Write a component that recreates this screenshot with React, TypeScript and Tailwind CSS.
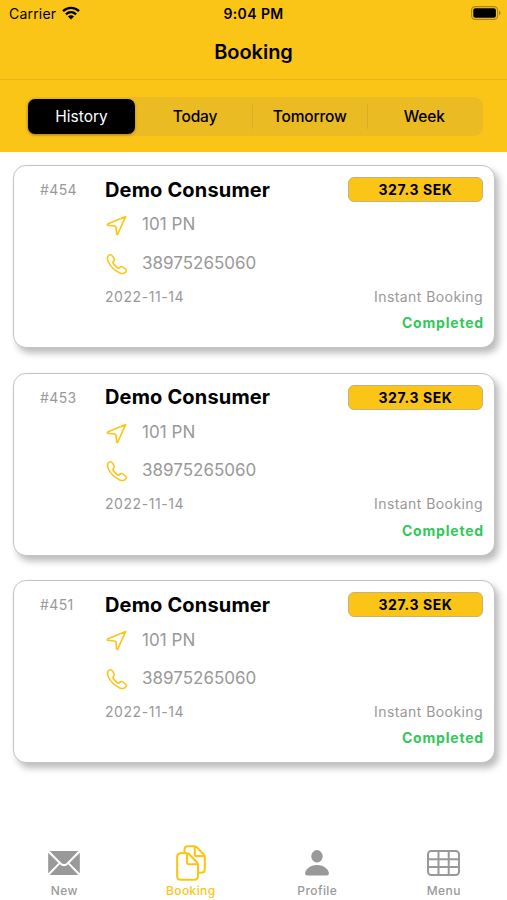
import React, { useState } from "react";
import clsx from "clsx";

interface Booking {
  id: string;
  name: string;
  address: string;
  phone: string;
  date: string;
  type: string;
  status: string;
  price: string;
}

const bookings: Booking[] = ["#454", "#453", "#451"].map((id) => ({
  id,
  name: "Demo Consumer",
  address: "101 PN",
  phone: "38975265060",
  date: "2022-11-14",
  type: "Instant Booking",
  status: "Completed",
  price: "327.3 SEK",
}));

const filters = ["History", "Today", "Tomorrow", "Week"];

function WifiIcon() {
  return (
    <svg className="w-[18px] h-[14px] -mt-px" viewBox="0 0 18 14" fill="none" stroke="#000" strokeWidth="2.4">
      <path d="M1 5.1C5.5 0.8 12.5 0.8 17 5.1" />
      <path d="M3.9 8.3C6.9 5.6 11.1 5.6 14.1 8.3" />
      <path d="M9 13.6L5.9 10.5C7.6 8.9 10.4 8.9 12.1 10.5Z" fill="#000" stroke="none" />
    </svg>
  );
}

function BatteryIcon() {
  return (
    <svg className="w-[30px] h-[14px] -mt-px" viewBox="0 0 30 14">
      <rect x="0.6" y="0.6" width="26" height="12.8" rx="3.6" fill="none" stroke="#a8851a" strokeWidth="1.1" />
      <rect x="2.3" y="2.3" width="22.6" height="9.4" rx="2" fill="#000" />
      <path d="M28 4.8C30 5.4 30 8.6 28 9.2Z" fill="#a8851a" />
    </svg>
  );
}

function LocationIcon() {
  return (
    <svg className="w-6 h-6" viewBox="0 0 24 24" fill="none" stroke="#fbc518" strokeWidth="1.6" strokeLinejoin="round">
      <path d="M20.6 3.6L2.6 11.1C2 11.4 2 12.1 2.7 12.3L10.8 13.2L11.6 20.9C11.7 21.7 12.4 21.7 12.7 21.1Z" />
    </svg>
  );
}

function PhoneIcon() {
  return (
    <svg className="w-6 h-6" viewBox="0 0 24 24" fill="none" stroke="#fbc518" strokeWidth="1.6" strokeLinejoin="round">
      <path d="M3.2 4C4.3 2.6 5.9 2.2 7 3.6L9 6.4C9.7 7.5 9.5 8.3 8.7 9.2L8.1 9.9C7.7 10.4 7.8 10.8 8.1 11.3C9.2 13 10.8 14.7 12.8 16C13.3 16.3 13.8 16.3 14.2 15.9L14.9 15.2C15.7 14.5 16.6 14.3 17.5 14.9L20.4 16.9C21.8 18 21.5 19.5 20.1 20.6C18.7 21.8 16.8 21.8 14.8 20.9C9.7 18.7 5.3 14.3 3.1 9.3C2.2 7.2 2.1 5.4 3.2 4Z" />
    </svg>
  );
}

function MailIcon() {
  return (
    <svg className="w-8 h-6" viewBox="0 0 32 24" fill="#999">
      <path d="M1.6 0H30.4L19.1 11.4C17.2 13.4 14.8 13.4 12.9 11.4Z" />
      <path d="M0.2 1.7L10.5 12L0.2 22.3Z" />
      <path d="M31.8 1.7L21.5 12L31.8 22.3Z" />
      <path d="M1.6 24L11.8 13.3C14.4 15.9 17.6 15.9 20.2 13.3L30.4 24Z" />
    </svg>
  );
}

function DocumentsIcon() {
  return (
    <svg className="w-[30px] h-9" viewBox="0 0 30 36" fill="none" stroke="#fbc518" strokeWidth="2.1" strokeLinejoin="round">
      <path d="M8.5 8V4.5C8.5 2.5 9.7 1.2 11.8 1.2H18.2C19.3 1.2 20 1.5 20.8 2.3L27.6 9.2C28.5 10.1 28.8 10.9 28.8 12V24C28.8 26.6 27.5 27.8 25 27.8H22.5" />
      <path d="M18.8 1.5V9.5C18.8 10.5 19.3 11.1 20.4 11.1H28.4" />
      <path d="M11 8.3H4.7C2.5 8.3 1.2 9.6 1.2 11.8V31C1.2 33.4 2.4 34.7 4.8 34.7H18.2C20.8 34.7 22 33.4 22 31V19.8C22 18.7 21.7 18 20.9 17.2L13.2 9.3C12.5 8.6 11.9 8.3 11 8.3Z" />
      <path d="M11.1 8.5V17.6C11.1 18.7 11.7 19.3 12.8 19.3H21.8" />
    </svg>
  );
}

function PersonIcon() {
  return (
    <svg className="w-6 h-[26px]" viewBox="0 0 24 26" fill="#999">
      <ellipse cx="12" cy="6.3" rx="5.7" ry="6.2" />
      <path d="M2.4 25.6C0.9 25.6 0.1 24.8 0.1 23.6C0.1 20 4.6 15.1 12 15.1C19.4 15.1 23.9 20 23.9 23.6C23.9 24.8 23.1 25.6 21.6 25.6Z" />
    </svg>
  );
}

function TableIcon() {
  return (
    <svg className="w-[33px] h-[26px]" viewBox="0 0 33 26" fill="none" stroke="#999" strokeWidth="2">
      <rect x="1" y="1" width="31" height="24" rx="3.2" />
      <path d="M11.5 1V25M21.7 1V25M1 9.3H32M1 17.1H32" />
    </svg>
  );
}

const tabs = [
  { label: "New", icon: <MailIcon /> },
  { label: "Booking", icon: <DocumentsIcon /> },
  { label: "Profile", icon: <PersonIcon /> },
  { label: "Menu", icon: <TableIcon /> },
];

function BookingCard({ booking }: { booking: Booking }) {
  return (
    <article className="flex h-[183px] rounded-[13px] border border-[#c4c4c6] bg-white pt-[11px] pl-[26px] pr-[11px] shadow-[4px_5px_7px_rgba(0,0,0,0.27)] whitespace-nowrap">
      <div className="w-[65px] h-[25px] flex items-center text-[14px] tracking-[0.4px] text-[#999]">
        {booking.id}
      </div>
      <div className="flex-1">
        <div className="flex h-[25px] mb-1 items-center justify-between">
          <h2 className="text-[20px] font-bold tracking-[0.16px] text-black">{booking.name}</h2>
          <span className="flex w-[135px] h-[25px] items-center justify-center rounded-[6px] border border-[#c7b27a] bg-[#fbc518] text-[14px] font-bold tracking-[0.6px] text-black">
            {booking.price}
          </span>
        </div>
        <div className="flex h-[38px] items-center gap-[13px] text-[17px] text-[#999]">
          <LocationIcon />
          <span className="tracking-[0.05px]">{booking.address}</span>
        </div>
        <div className="flex h-[39px] items-center gap-[13px] text-[17px] text-[#999]">
          <PhoneIcon />
          <span>{booking.phone}</span>
        </div>
        <div className="flex h-[26px] items-center justify-between text-[14px] text-[#999]">
          <span className="tracking-[0.57px]">{booking.date}</span>
          <span className="tracking-[0.42px]">{booking.type}</span>
        </div>
        <div className="-mr-px flex h-[27px] items-center justify-end text-[14px] font-bold tracking-[0.8px] text-[#34c759]">
          {booking.status}
        </div>
      </div>
    </article>
  );
}

export default function App() {
  const [filter, setFilter] = useState("History");
  const [tab, setTab] = useState("Booking");

  return (
    <div className="flex flex-col w-full max-w-[507px] h-[900px] overflow-hidden bg-white font-['Inter','Liberation_Sans',sans-serif]">
      <header className="h-[152px] shrink-0 bg-[#fbc518] text-black">
        {/* Status bar */}
        <div className="grid grid-cols-3 h-[27px] items-center pl-[9px] pr-[6px] text-[14px]">
          <div className="flex items-center gap-[6px] tracking-[0.2px]">
            Carrier <WifiIcon />
          </div>
          <div className="-ml-[3px] text-center font-semibold tracking-[0.4px]">9:04 PM</div>
          <div className="flex justify-end">
            <BatteryIcon />
          </div>
        </div>
        <div className="flex h-[53px] items-center justify-center border-b border-[#e6b31a] pb-[2px]">
          <h1 className="text-[20px] font-semibold tracking-[-0.05px]">Booking</h1>
        </div>

        {/* Date filter */}
        <div className="ml-[26px] mr-6 mt-[17px] flex h-[39px] items-center rounded-[9px] bg-[#ebbb24] pl-[2px]">
          {filters.map((item, idx) => (
            <button
              key={item}
              onClick={() => setFilter(item)}
              className={clsx(
                "flex items-center justify-center text-[15.5px]",
                item === filter ? "h-[35px] w-[107px] rounded-[7px] bg-black text-white shadow-[0_1px_3px_rgba(0,0,0,0.3)]" : "h-[25px] font-medium tracking-[-0.15px]",
                item !== filter && (idx === 1 ? "w-[117px] pl-[3px]" : "w-[114.5px]"),
                idx > 1 && "border-l border-[#dbae25]"
              )}
            >
              {item}
            </button>
          ))}
        </div>
      </header>

      <main className="flex flex-1 flex-col gap-[24.67px] pt-[13px] pl-[13px] pr-3">
        {bookings.map((booking) => (
          <BookingCard key={booking.id} booking={booking} />
        ))}
      </main>

      <nav className="grid grid-cols-4 h-[60px] shrink-0 pl-px text-[12px] tracking-[0.4px] font-medium">
        {tabs.map(({ label, icon }) => (
          <button
            key={label}
            onClick={() => setTab(label)}
            className={clsx("flex flex-col items-center", label === tab ? "text-[#fbc518]" : "text-[#999]")}
          >
            <span className="flex h-[46px] items-center">{icon}</span>
            <span className="-mt-[3px] leading-4">{label}</span>
          </button>
        ))}
      </nav>
    </div>
  );
}
